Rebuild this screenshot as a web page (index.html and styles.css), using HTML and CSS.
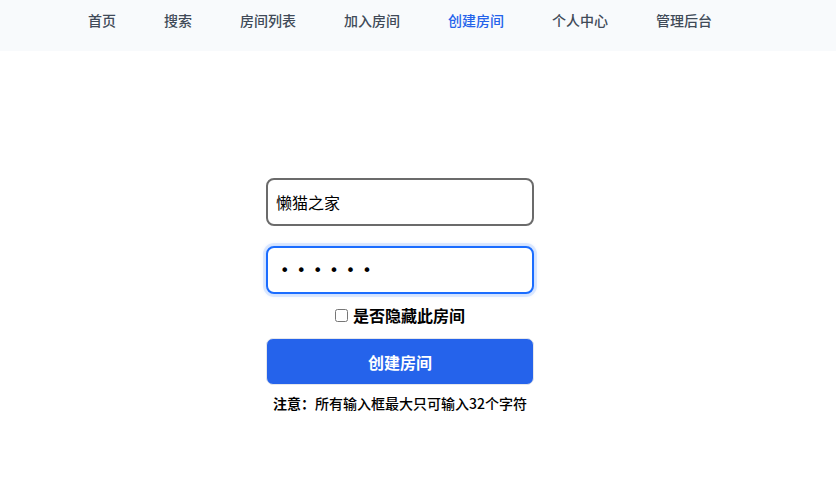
FILE: index.html
```html
<!DOCTYPE html>
<html lang="zh-CN">
<head>
    <meta charset="UTF-8">
    <meta name="viewport" content="width=device-width, initial-scale=1.0">
    <title>创建房间</title>
    <link rel="stylesheet" href="styles.css">
</head>
<body>
    <!-- 顶部导航 -->
    <nav class="topbar">
        <div class="nav-inner">
            <a href="#" class="nav-link">首页</a>
            <a href="#" class="nav-link">搜索</a>
            <a href="#" class="nav-link">房间列表</a>
            <a href="#" class="nav-link">加入房间</a>
            <a href="#" class="nav-link active">创建房间</a>
            <a href="#" class="nav-link">个人中心</a>
            <a href="#" class="nav-link">管理后台</a>
        </div>
    </nav>

    <!-- 创建房间表单 -->
    <main class="page">
        <form class="create-form">
            <input type="text" class="field" value="懒猫之家" maxlength="32">
            <input type="password" class="field field-focus" value="123456" maxlength="32">
            <label class="hide-check">
                <input type="checkbox">
                <span>是否隐藏此房间</span>
            </label>
            <button type="button" class="botao-criar">创建房间</button>
            <p class="tip"><strong>注意：</strong>所有输入框最大只可输入32个字符</p>
        </form>
    </main>
</body>
</html>
```

FILE: styles.css
```css
* {
    margin: 0;
    padding: 0;
    box-sizing: border-box;
}

body {
    font-family: "Noto Sans CJK SC", "Noto Sans", sans-serif;
    background-color: #fff;
    color: #000;
}

.topbar {
    background-color: #f8fafc;
    height: 51px;
}

.nav-inner {
    width: 800px;
    display: flex;
    justify-content: center;
    gap: 48px;
}

.nav-link {
    line-height: 40px;
    font-size: 14px;
    font-weight: 500;
    color: #404a58;
    text-decoration: none;
}

.nav-link.active {
    color: #2563eb;
}

.page {
    width: 800px;
    display: flex;
    justify-content: center;
    padding-top: 127px;
}

.create-form {
    width: 268px;
    display: flex;
    flex-direction: column;
    align-items: center;
}

.field {
    width: 100%;
    height: 48px;
    padding: 0 8px;
    border: 2px solid #6b6b6b;
    border-radius: 8px;
    font-family: inherit;
    font-size: 16px;
    color: #000;
    outline: none;
    margin-bottom: 20px;
}

/* campo em foco */
.field-focus {
    border-color: #1a6cff;
    box-shadow: 0 0 0 3px rgba(26, 108, 255, 0.12), 0 0 6px rgba(26, 108, 255, 0.2);
    font-family: "DejaVu Sans", sans-serif;
    letter-spacing: 7px;
    padding-left: 12px;
    margin-bottom: 9px;
}

.hide-check {
    display: flex;
    align-items: center;
    gap: 5px;
    font-size: 16px;
    font-weight: 600;
    height: 24px;
    margin-bottom: 11px;
}

.hide-check input {
    width: 13px;
    height: 13px;
    margin: 0;
}

.botao-criar {
    width: 100%;
    height: 47px;
    background-color: #2563eb;
    color: #fff;
    border: 1px solid #e5e7eb;
    border-radius: 7px;
    font-family: inherit;
    font-size: 16px;
    font-weight: 700;
    cursor: pointer;
}

.tip {
    margin-top: 8px;
    font-size: 14px;
    font-weight: 500;
}

.tip strong {
    font-weight: 700;
}
```
